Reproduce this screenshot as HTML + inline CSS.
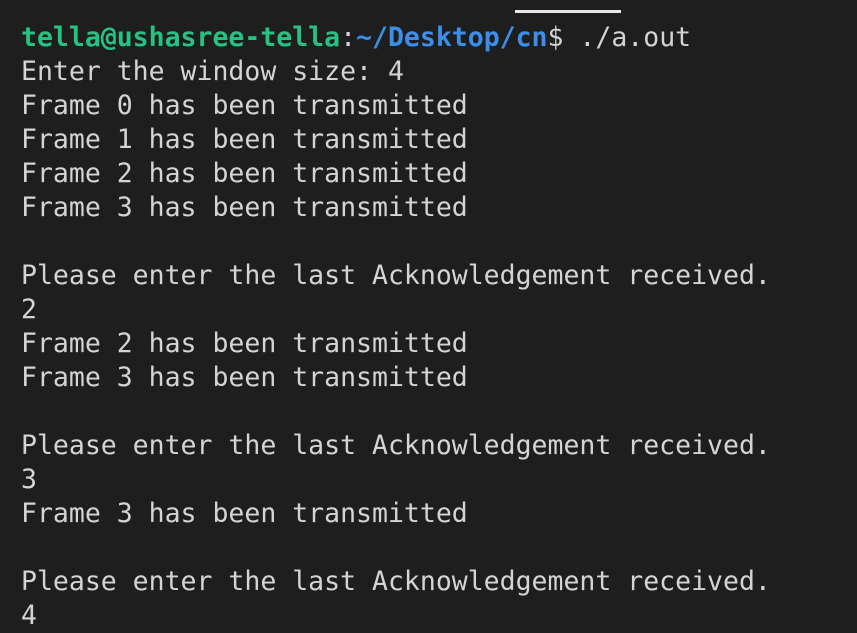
<!DOCTYPE html>
<html><head><meta charset="utf-8"><style>
html,body{margin:0;padding:0;background:#1e1e1e;width:857px;height:633px;overflow:hidden}
pre{margin:0;position:absolute;left:21px;top:21px;font-family:"DejaVu Sans Mono","Liberation Mono",monospace;font-size:26.5px;line-height:34px;color:#d4d4d4;white-space:pre}
.g{color:#26c281;font-weight:bold}.b{color:#3b8eea;font-weight:bold}
.bar{position:absolute;left:515px;top:10px;width:106px;height:3px;background:#e8e8e8}
</style></head><body>
<div class="bar"></div>
<pre><span class="g">tella@ushasree-tella</span>:<span class="b">~/Desktop/cn</span>$ ./a.out
Enter the window size: 4
Frame 0 has been transmitted
Frame 1 has been transmitted
Frame 2 has been transmitted
Frame 3 has been transmitted

Please enter the last Acknowledgement received.
2
Frame 2 has been transmitted
Frame 3 has been transmitted

Please enter the last Acknowledgement received.
3
Frame 3 has been transmitted

Please enter the last Acknowledgement received.
4</pre>
</body></html>
